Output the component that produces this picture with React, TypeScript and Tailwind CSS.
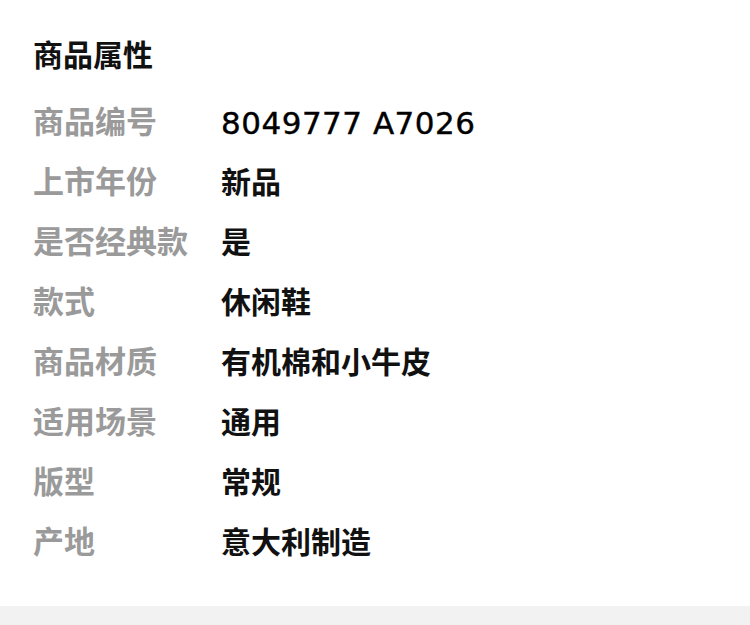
const rows: [string, string][] = [
  ["商品编号", "8049777 A7026"],
  ["上市年份", "新品"],
  ["是否经典款", "是"],
  ["款式", "休闲鞋"],
  ["商品材质", "有机棉和小牛皮"],
  ["适用场景", "通用"],
  ["版型", "常规"],
  ["产地", "意大利制造"],
];

export default function App() {
  return (
    <div
      className="w-[750px] h-[625px] bg-white flex flex-col"
      style={{ fontFamily: '"Noto Sans CJK SC", "Noto Sans", sans-serif' }}
    >
      <div className="pl-[33px] pt-[33px] pb-[36px]">
        <h2 className="text-[30px] leading-[40px] font-bold text-[#111] mb-[17px]">商品属性</h2>
        <div className="flex flex-col">
          {rows.map(([k, v]) => {
            const latin = /^[\x00-\x7f]+$/.test(v);
            return (
              <div key={k} className="flex items-center h-[60px] text-[31px] leading-[40px]">
                <span className="w-[188px] shrink-0 text-[#9a9a9a] font-bold">{k}</span>
                {latin ? (
                  <span className="mt-[6px] text-black font-['DejaVu_Sans',sans-serif] text-[31px] tracking-[0.5px] [-webkit-text-stroke:0.4px_black]">{v}</span>
                ) : (
                  <span className="text-[#111] font-bold text-[30px]">{v}</span>
                )}
              </div>
            );
          })}
        </div>
      </div>
      <div className="flex-1 bg-[#f2f2f2]" />
    </div>
  );
}
